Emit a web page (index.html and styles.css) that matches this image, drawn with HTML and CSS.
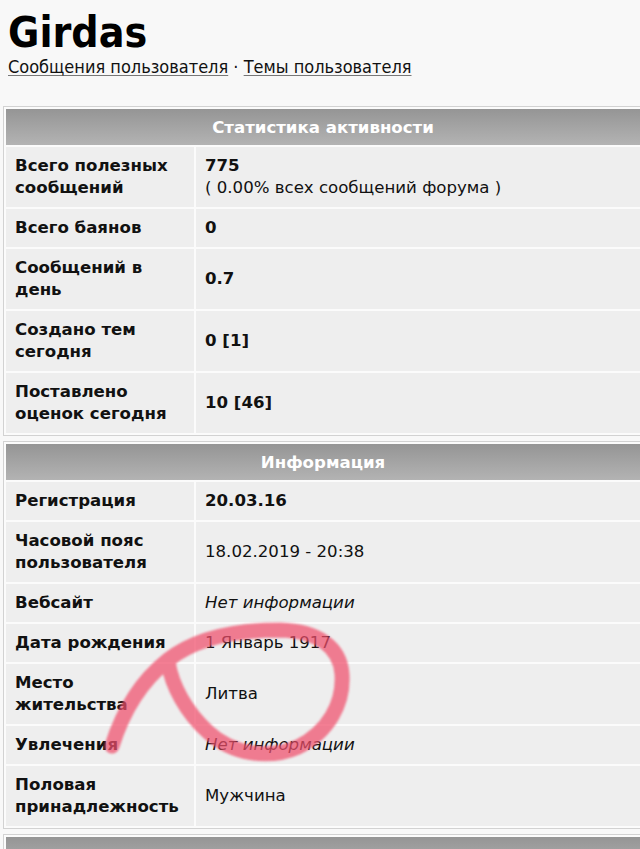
FILE: index.html
```html
<!DOCTYPE html>
<html lang="ru">
<head>
<meta charset="utf-8">
<title>Girdas</title>
<link rel="stylesheet" href="styles.css">
</head>
<body>
<div class="page">
  <h1 class="username">Girdas</h1>
  <div class="userlinks"><a href="#">Сообщения пользователя</a> · <a href="#">Темы пользователя</a></div>

  <table class="profile">
    <colgroup><col class="col-label"><col class="col-value"></colgroup>
    <tr><th colspan="2">Статистика активности</th></tr>
    <tr><td class="label">Всего полезных сообщений</td><td class="value"><b>775</b><br>( 0.00% всех сообщений форума )</td></tr>
    <tr><td class="label">Всего баянов</td><td class="value"><b>0</b></td></tr>
    <tr><td class="label">Сообщений в день</td><td class="value"><b>0.7</b></td></tr>
    <tr><td class="label">Создано тем сегодня</td><td class="value"><b>0 [1]</b></td></tr>
    <tr><td class="label">Поставлено оценок сегодня</td><td class="value"><b>10 [46]</b></td></tr>
  </table>

  <table class="profile">
    <colgroup><col class="col-label"><col class="col-value"></colgroup>
    <tr><th colspan="2">Информация</th></tr>
    <tr><td class="label">Регистрация</td><td class="value"><b>20.03.16</b></td></tr>
    <tr><td class="label">Часовой пояс пользователя</td><td class="value">18.02.2019 - 20:38</td></tr>
    <tr><td class="label">Вебсайт</td><td class="value"><i>Нет информации</i></td></tr>
    <tr><td class="label">Дата рождения</td><td class="value">1 Январь 1917</td></tr>
    <tr><td class="label">Место жительства</td><td class="value">Литва</td></tr>
    <tr><td class="label">Увлечения</td><td class="value"><i>Нет информации</i></td></tr>
    <tr><td class="label">Половая принадлежность</td><td class="value">Мужчина</td></tr>
  </table>

  <table class="profile">
    <colgroup><col class="col-label"><col class="col-value"></colgroup>
    <tr><th colspan="2">Дополнительно</th></tr>
  </table>

  <svg class="scribble" width="640" height="849" viewBox="0 0 640 849" aria-hidden="true">
    <defs>
      <filter id="soft" x="-10%" y="-10%" width="120%" height="120%">
        <feGaussianBlur stdDeviation="1.2"/>
      </filter>
    </defs>
    <path d="M112 746 C 122 714, 140 682, 168 660 C 196 638, 238 630, 280 630 C 318 631, 340 647, 342 674 C 344 704, 328 732, 298 747 C 268 760, 232 754, 208 732 C 186 712, 172 686, 168 662"
      fill="none" stroke="#f0506c" stroke-width="15" stroke-linecap="round" stroke-linejoin="round" opacity="0.72" filter="url(#soft)"/>
  </svg>
</div>
</body>
</html>
```

FILE: styles.css
```css
html, body {
  margin: 0;
  padding: 0;
}

body {
  background: #f8f8f8;
  color: #111;
  font-family: "DejaVu Sans", Verdana, sans-serif;
  font-size: 16.6px;
  overflow: hidden;
}

.page {
  position: relative;
  width: 640px;
  height: 849px;
  overflow: hidden;
}

.username {
  margin: 0;
  padding: 10px 0 0 8px;
  font-family: "DejaVu Sans", sans-serif;
  font-stretch: condensed;
  font-weight: bold;
  font-size: 42.5px;
  line-height: 46px;
  color: #000;
}

.userlinks {
  padding: 0 0 0 8px;
  font-family: "DejaVu Sans", sans-serif;
  font-stretch: condensed;
  font-size: 18px;
  line-height: 22px;
  height: 50px;
  color: #111;
}

.userlinks a {
  color: #111;
  text-decoration: underline;
  text-decoration-color: #777;
  text-underline-offset: 2px;
}

.profile {
  margin: 0 0 5px 3px;
  width: 640px;
  border: 1px solid #d2d2d2;
  border-spacing: 2px;
  background: #fbfbfb;
  table-layout: fixed;
}

.col-label {
  width: 188px;
}

.profile th {
  height: 36px;
  padding: 0;
  background: linear-gradient(#959595, #b3b3b3);
  color: #fff;
  font-weight: bold;
  font-size: 16.6px;
  text-align: center;
  vertical-align: middle;
}

.profile td {
  background: #eeeeee;
  padding: 8px 8px 8px 9px;
  line-height: 22px;
  vertical-align: middle;
}

.profile .label {
  font-weight: bold;
  color: #111;
}

.profile .value {
  color: #111;
}

.scribble {
  position: absolute;
  left: 0;
  top: 0;
  pointer-events: none;
}
```
